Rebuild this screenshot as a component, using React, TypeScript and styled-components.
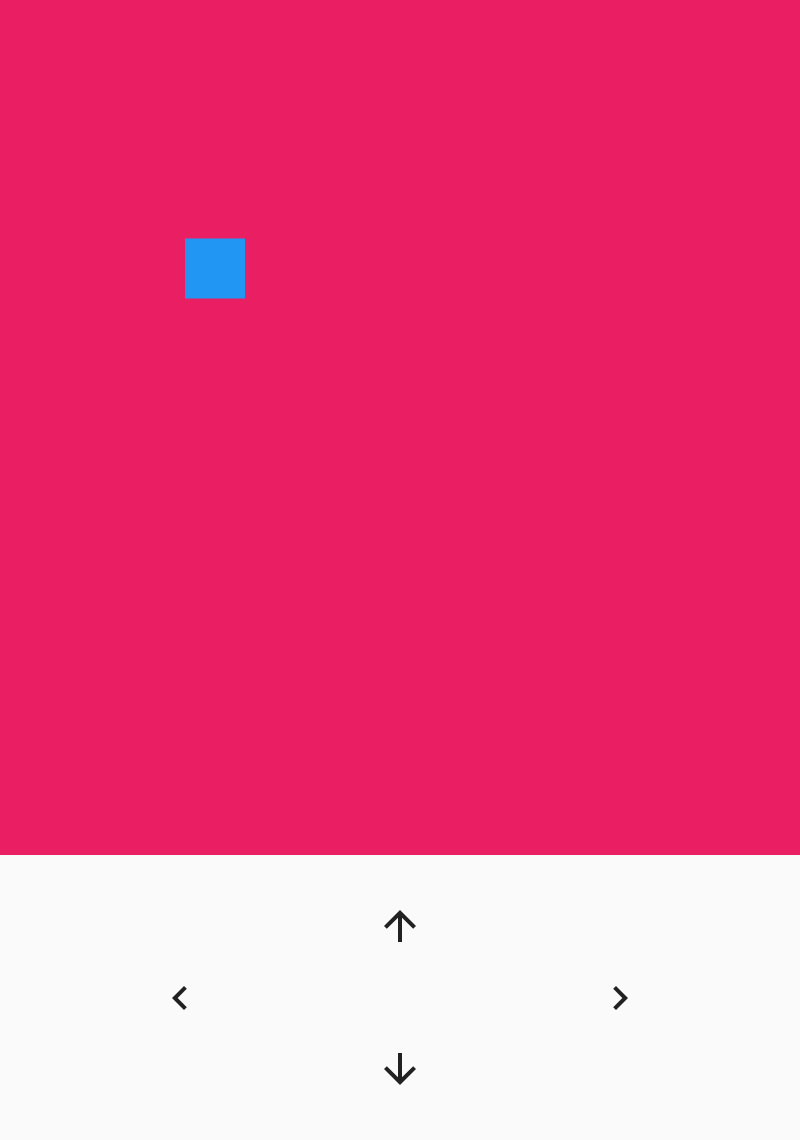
import React, { useState } from "react";
import styled, { createGlobalStyle } from "styled-components";

const GlobalStyle = createGlobalStyle`
  body {
    margin: 0;
    background: #fafafa;
    font-family: Roboto, sans-serif;
  }
`;

const Page = styled.main`
  display: grid;
  grid-template-rows: 3fr 1fr;
  height: 100vh;
`;

const Board = styled.section`
  position: relative;
  container-type: size;
  overflow: hidden;
  background: #e91e63;
`;

const Player = styled.div`
  position: absolute;
  top: 0;
  left: 0;
  width: 60px;
  height: 60px;
  background: #2196f3;
`;

const Controls = styled.nav`
  display: flex;
  align-items: center;
  background: #fafafa;
`;

const Pad = styled.div`
  display: grid;
  grid-template-rows: repeat(3, 1fr);
  align-items: center;
  justify-items: center;
  width: 100%;
  height: 75%;
`;

const SideRow = styled.div`
  display: flex;
  justify-content: space-evenly;
  gap: 236px;
  width: 100%;
`;

const MoveButton = styled.button`
  display: flex;
  padding: 0;
  border: 0;
  background: none;
  color: #212121;
  cursor: pointer;
`;

const Icon = styled.svg`
  width: 48px;
  height: 48px;
  fill: currentColor;
`;

const icons = {
  Up: "M4 12l1.41 1.41L11 7.83V20h2V7.83l5.58 5.59L20 12l-8-8-8 8z",
  Down: "M20 12l-1.41-1.41L13 16.17V4h-2v12.17l-5.58-5.59L4 12l8 8 8-8z",
  Left: "M15.41 7.41L14 6l-6 6 6 6 1.41-1.41L10.83 12z",
  Right: "M10 6L8.59 7.41 13.17 12l-4.58 4.59L10 18l6-6z",
};

type Direction = keyof typeof icons;

function Move({ to, onMove }: { to: Direction; onMove: (to: Direction) => void }) {
  return (
    <MoveButton type="button" aria-label={`Move ${to.toLowerCase()}`} onClick={() => onMove(to)}>
      <Icon viewBox="0 0 24 24" aria-hidden="true">
        <path d={icons[to]} />
      </Icon>
    </MoveButton>
  );
}

// The player's place is a share, in percent, of the free room on each axis.
const STEP = 5;
const clamp = (value: number) => Math.min(100, Math.max(0, value));

export default function App() {
  const [position, setPosition] = useState({ x: 25, y: 30 });

  const move = (to: Direction) =>
    setPosition(({ x, y }) => ({
      x: clamp(x + (to === "Right" ? STEP : to === "Left" ? -STEP : 0)),
      y: clamp(y + (to === "Down" ? STEP : to === "Up" ? -STEP : 0)),
    }));

  return (
    <>
      <GlobalStyle />
      <Page>
        <Board>
          <Player
            style={{
              transform: `translate(calc((100cqw - 100%) * ${position.x / 100}), calc((100cqh - 100%) * ${position.y / 100}))`,
            }}
          />
        </Board>
        <Controls>
          <Pad>
            <Move to="Up" onMove={move} />
            <SideRow>
              <Move to="Left" onMove={move} />
              <Move to="Right" onMove={move} />
            </SideRow>
            <Move to="Down" onMove={move} />
          </Pad>
        </Controls>
      </Page>
    </>
  );
}
